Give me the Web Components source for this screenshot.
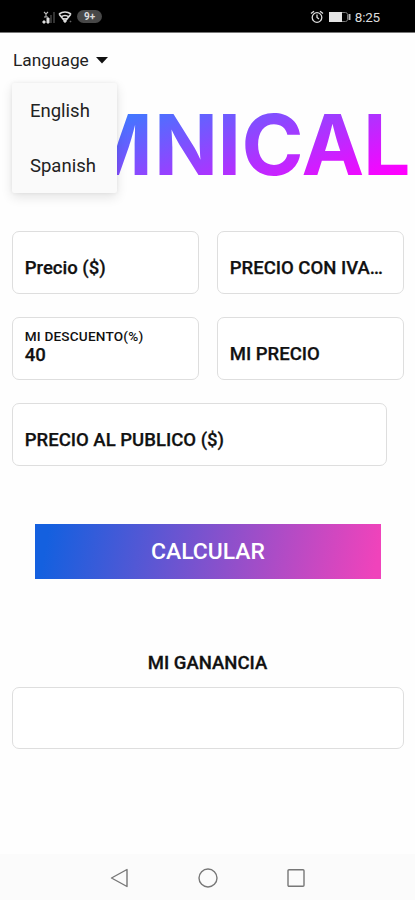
<!DOCTYPE html>
<html lang="es">
<head>
<meta charset="utf-8">
<title>OMNICAL</title>
<style>
html,body{margin:0;height:100%}
body{background:#fefefe;color:#111;font-family:Roboto,sans-serif;overflow:hidden}
</style>
</head>
<body>
<omni-app></omni-app>
<script>
function define(name, html, setup) {
  customElements.define(name, class extends HTMLElement {
    constructor() {
      super();
      this.attachShadow({ mode: 'open' }).innerHTML = html;
    }
    connectedCallback() { if (setup) setup(this, this.shadowRoot); }
  });
}

define('status-bar', `<style>
:host{display:flex;height:33px;box-sizing:border-box;background:#000;border-bottom:1px solid #777;color:#ddd;justify-content:space-between;padding:1px 34px 0 42px}
div{display:flex;align-items:center}
svg{display:block}
.badge{font:700 10px/13px Roboto,sans-serif;background:#484848;border-radius:7px;width:25px;text-align:center;margin-left:4px}
.time{font:400 13.500px/16px Roboto,sans-serif;letter-spacing:-.2px;margin-left:2px;margin-right:1px}
</style>
<div>
<svg width="14" height="16" viewBox="0 0 14 16"><path d="M1 14h2v-2H1zM5 14h2V9H5z" fill="#ddd" stroke="#ddd"/><path d="M2 3l2 2 2-2M4 4v4M2 8h4" fill="none" stroke="#bbb" stroke-width="1.1"/><path d="M9 14V6M12 14V3" stroke="#333" stroke-width="2"/></svg>
<svg width="17" height="16" viewBox="0 0 17 16" fill="none" stroke="#ddd" stroke-width="1.6"><path d="M3 5q6-4 12 0M5 8q4-3 8 0M7 10.500q2-1.500 4 0M3 5l6 7.500L15 5"/><path d="M7 12h4l-2 2z" fill="#ddd" stroke="none"/><path d="M14 13l1-1" stroke="#666"/></svg>
<span class="badge">9+</span></div>
<div>
<svg width="14" height="14" viewBox="0 0 14 14" fill="none" stroke="#ddd" stroke-width="1.3"><circle cx="7" cy="7.500" r="4.800"/><path d="M7 4.500v3l2 1.500M1 3.500L4 1.200M13 3.500L10 1.200"/></svg>
<svg width="25" height="14" viewBox="0 0 25 14" style="margin-left:4px"><rect x="1.500" y="2.500" width="18" height="9" rx="2" fill="none" stroke="#777"/><path d="M1 2h13v10H1z" fill="#e4e4e4"/><path d="M21.500 4v6" stroke="#bbb" stroke-width="2"/></svg>
<span class="time">8:25</span></div>`);

define('language-menu', `<style>
:host{display:block;position:relative;height:54px;padding-left:13px;font-size:18.500px;line-height:54px;color:#222}
.trigger{display:flex;align-items:center;gap:7px;font-size:17.300px;height:54px;line-height:55px}
.menu{position:absolute;z-index:2;left:12px;top:50px;width:105px;height:110px;background:#fafafa;border-radius:2px;box-shadow:0 4px 12px rgba(0,0,0,.11),0 0 4px rgba(0,0,0,.06);box-sizing:border-box}
::slotted(*){display:block;height:55px;line-height:57px;padding-left:18px}
</style>
<div class="trigger"><span>Language</span><svg width="12" height="7" viewBox="0 0 12 7"><path d="M0 0h12L6 6.500z" fill="#111"/></svg></div>
<div class="menu"><slot></slot></div>`);

define('brand-logo', `<style>
:host{display:block;height:97px}
svg{display:block;overflow:visible}
text{font:700 84px Inter,sans-serif;fill:url(#g)}
</style>
<svg width="415" height="97" viewBox="0 87 415 97"><defs><linearGradient id="g" gradientUnits="userSpaceOnUse" x1="35" y1="94" x2="108" y2="285"><stop offset="0" stop-color="#00a0ff"/><stop offset="1" stop-color="#f0f"/></linearGradient></defs>
<text x="17 74.500 154 217.500 241.500 301.500 363" y="175">OMNICAL</text></svg>`);

define('price-field', `<style>
:host{display:flex;flex-direction:column;height:63px;box-sizing:border-box;border:1.500px solid #dedede;border-radius:7px;background:#fff;padding:0 11.700px;font-weight:500;font-size:18.550px;line-height:22px;color:#111;-webkit-text-stroke:.25px #111}
.label{margin-top:25px;white-space:nowrap;overflow:hidden;text-overflow:ellipsis}
:host([filled]) .label{margin-top:10px;font-size:13.600px;line-height:16px;letter-spacing:.2px;-webkit-text-stroke:0}
</style>
<div class="label"></div><slot></slot>`, (host, root) => {
  root.querySelector('.label').textContent = host.getAttribute('label') || '';
});

define('gradient-button', `<style>
:host{display:block;height:55px}
button{display:block;width:100%;height:100%;border:0;padding:0;background:linear-gradient(100deg,#1460df 4%,#f043bb 98%);color:#fff;font:500 22.900px/56px Roboto,sans-serif}
</style><button><slot></slot></button>`);

define('nav-bar', `<style>
:host{display:flex;height:45px;background:#fbfbfb;justify-content:center;align-items:center;gap:68px}
svg{display:block;fill:none;stroke:#777;stroke-width:1.400;stroke-linejoin:round}
</style>
<svg width="20" height="20" viewBox="0 0 20 20"><path d="M17 1.500v17L1.500 10z"/></svg>
<svg width="20" height="20" viewBox="0 0 20 20"><circle cx="10" cy="10" r="9"/></svg>
<svg width="20" height="20" viewBox="0 0 20 20"><rect x="2" y="1.800" width="16" height="16.500" rx="1"/></svg>`);

define('omni-app', `<style>
:host{display:flex;flex-direction:column;width:415px;height:900px}
main{flex:1}
.form{display:grid;grid-template-columns:187px 187px;gap:23px 18px;padding:47px 0 0 12px}
.wide{grid-column:1/3;width:375px}
gradient-button{margin:58px 34px 0 35px}
h2{margin:73px 0 0;text-align:center;font:500 18.500px/22px Roboto,sans-serif;-webkit-text-stroke:.3px #111}
.result{margin:13px 11px 0 12px;height:62px}
nav-bar{height:46px;padding-top:2px;box-sizing:border-box}
</style>
<status-bar></status-bar>
<main>
<language-menu><span>English</span><span>Spanish</span></language-menu>
<brand-logo></brand-logo>
<div class="form">
<price-field label="Precio ($)"></price-field>
<price-field label="PRECIO CON IVA…"></price-field>
<price-field label="MI DESCUENTO(%)" filled>40</price-field>
<price-field label="MI PRECIO"></price-field>
<price-field class="wide" label="PRECIO AL PUBLICO ($)"></price-field>
</div>
<gradient-button>CALCULAR</gradient-button>
<h2>MI GANANCIA</h2>
<price-field class="result"></price-field>
</main>
<nav-bar></nav-bar>`);
</script>
</body>
</html>
